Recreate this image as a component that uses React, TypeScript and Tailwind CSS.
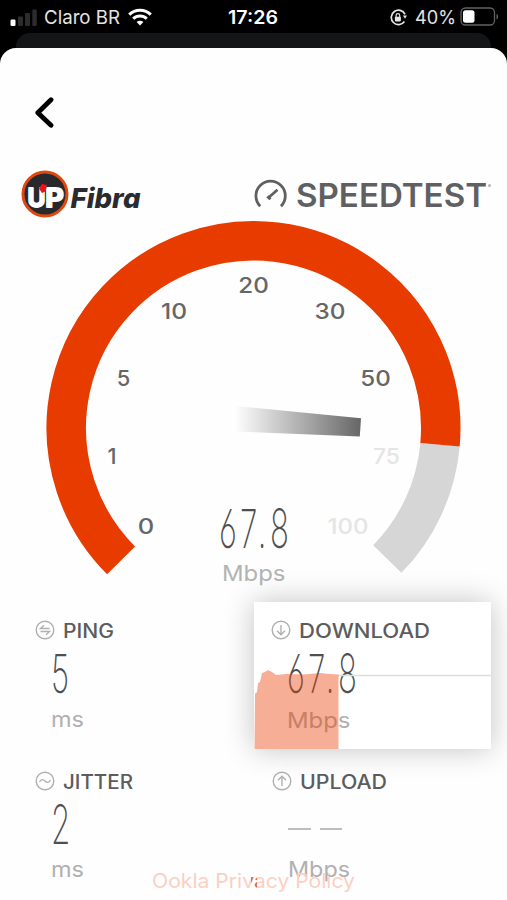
import type { ReactNode } from "react";

interface FitTextProps {
  text: string;
  width: number;
  size: number;
  height: number;
  baseline: number;
  className?: string;
}

// Single line of text stretched to an exact width
const FitText = ({ text, width, size, height, baseline, className }: FitTextProps) => (
  <svg width={width} height={height} className={`shrink-0 overflow-visible ${className ?? ""}`} fill="currentColor">
    <text x="0" y={baseline} fontSize={size} textLength={width} lengthAdjust="spacingAndGlyphs">
      {text}
    </text>
  </svg>
);

// Tall, condensed digits with loose tracking
const DIGIT_SCALE = 0.58;

const Digits = ({ text, x, y, width }: { text: string; x: number; y: number; width: number }) => (
  <text
    transform={`translate(${x} ${y}) scale(${DIGIT_SCALE} 1)`}
    fontSize="54"
    fontWeight="250"
    textLength={text.length > 1 ? width / DIGIT_SCALE : undefined}
    lengthAdjust="spacing"
    fill="#4f4f51"
    className="[font-feature-settings:'cv03']"
  >
    {text}
  </text>
);

const StatusBar = () => (
  <div className="flex h-[33px] shrink-0 items-center justify-between pl-[10px] pr-[8px] pt-[2px] text-[#e4e4e4]">
    <div className="flex w-[190px] items-center">
      <svg width="27" height="17" viewBox="0 0 27 17">
        <rect x="0.5" y="10.5" width="5" height="6.5" rx="1.2" fill="#fff" />
        <rect x="8" y="7.5" width="5" height="9.5" rx="1.2" fill="#2c2c2e" />
        <rect x="15" y="4" width="5" height="13" rx="1.2" fill="#2c2c2e" />
        <rect x="22.3" y="0.5" width="4.5" height="16.5" rx="1.2" fill="#2c2c2e" />
      </svg>
      <FitText text="Claro BR" width={76} size={19} height={20} baseline={16} className="ml-[7px]" />
      <svg width="24" height="18" viewBox="0 0 24 18" className="-mt-[2px] ml-[8px]" fill="none" stroke="#fff" strokeWidth="3">
        <path d="M1.2 6.6a15.4 15.4 0 0 1 21.600 0" />
        <path d="M5.2 10.700a9.700 9.700 0 0 1 13.600 0" />
        <path d="M12 17.500l-3.400-3.400a4.900 4.900 0 0 1 6.800 0z" fill="#fff" stroke="none" />
      </svg>
    </div>
    <FitText text="17:26" width={50} size={18.5} height={20} baseline={16} className="mr-[3px] font-semibold text-white" />
    <div className="flex w-[190px] items-center justify-end">
      <svg width="17" height="17" viewBox="0 0 17 17" fill="none" stroke="#e4e4e4" strokeWidth="1.7">
        <path d="M15 5.300A7.200 7.200 0 1 0 14.400 12.500" />
        <path d="M12.900 6.500h4.100l-2 3.300z" fill="#e4e4e4" stroke="none" />
        <rect x="4.9" y="7.8" width="6" height="4.6" rx="0.8" fill="#e4e4e4" stroke="none" />
        <path d="M6.100 8V6.500a1.800 1.800 0 0 1 3.600 0V8" strokeWidth="1.2" />
      </svg>
      <FitText text="40%" width={41} size={18.5} height={20} baseline={16} className="ml-[8px]" />
      <svg width="39" height="20" viewBox="0 0 39 20" className="-mt-[2px] ml-[4px]">
        <rect x="1" y="1" width="33.5" height="17" rx="4.5" fill="none" stroke="#626264" strokeWidth="1.3" />
        <rect x="3" y="3.3" width="11.500" height="12.500" rx="2.5" fill="#fff" />
        <path d="M36.500 7v5.400c2.200-1 2.200-4.400 0-5.400z" fill="#626264" />
      </svg>
    </div>
  </div>
);

const FibraLogo = () => (
  <svg width="122" height="50" viewBox="20 169 122 50" fontFamily="Inter">
    <circle cx="45" cy="194" r="22" fill="#27292d" stroke="#e1470f" strokeWidth="3" />
    <g fontSize="25.5" fontWeight="700" fill="#fff" stroke="#fff" strokeWidth="1.8" strokeLinejoin="round">
      <text x="27.5" y="206.500" textLength="18" lengthAdjust="spacingAndGlyphs">U</text>
      <text x="45.200" y="206.500" textLength="18.5" lengthAdjust="spacingAndGlyphs">P</text>
    </g>
    <path d="M39 188.500l3-4.500 5 1-1.500 6.500-3.500 1.500z" fill="#e9131b" />
    <text
      x="70.500"
      y="208"
      fontSize="27.5"
      fontWeight="800"
      fontStyle="italic"
      fill="#292b30"
      textLength="70"
      lengthAdjust="spacingAndGlyphs"
    >
      Fibra
    </text>
  </svg>
);

const SpeedtestLogo = () => (
  <div className="flex items-center text-[#606062]">
    <svg width="33" height="30" viewBox="0 0 33 30" fill="none" stroke="currentColor">
      <path d="M6.200 27.200A14.700 14.700 0 1 1 27 27.200" strokeWidth="2.8" />
      <path d="M15 18.300l8.500-7.600" strokeWidth="2.7" />
      <path d="M13.400 17.200l3 3.100" strokeWidth="3" />
    </svg>
    <FitText text="SPEEDTEST" width={191} size={32} height={30} baseline={27.5} className="ml-[9px] font-semibold" />
    <span className="mb-[18px] ml-[1px] size-[3px] rounded-full bg-[#b5b5b6]" />
  </div>
);

const ticks = [
  { label: "0", x: 146, y: 533.5, width: 16.5 },
  { label: "1", x: 112, y: 464, width: 9 },
  { label: "5", x: 123.5, y: 386, width: 13.5 },
  { label: "10", x: 174, y: 319, width: 26 },
  { label: "20", x: 253.5, y: 292.5, width: 30.5 },
  { label: "30", x: 330, y: 319, width: 31 },
  { label: "50", x: 375.5, y: 386, width: 30.5 },
  { label: "75", x: 386.5, y: 464, width: 27 },
  { label: "100", x: 348, y: 533.5, width: 41 },
];

const CX = 253.5;
const CY = 428;
const RADIUS = 187.25;
const SPEED = 67.8;

function arc(from: number, to: number) {
  const point = (deg: number) => {
    const a = (deg * Math.PI) / 180;
    return `${CX + RADIUS * Math.cos(a)} ${CY + RADIUS * Math.sin(a)}`;
  };
  return `M${point(from)}A${RADIUS} ${RADIUS} 0 ${to - from > 180 ? 1 : 0} 1 ${point(to)}`;
}

const Gauge = () => (
  <svg width="507" height="371" viewBox="0 219 507 371" className="shrink-0" fontFamily="Inter">
    <defs>
      <linearGradient id="needle" x1="235" x2="361" y1="0" y2="0" gradientUnits="userSpaceOnUse">
        <stop offset="0" stopColor="#666" stopOpacity="0" />
        <stop offset="1" stopColor="#666" />
      </linearGradient>
    </defs>
    <path d={arc(5.1, 44.4)} fill="none" stroke="#d6d6d6" strokeWidth="39.5" />
    <path d={arc(-225, 5.1)} fill="none" stroke="#e83b00" strokeWidth="39.5" />
    <path d="M235 406L361 418.300L359.800 436.400L235 431.500z" fill="url(#needle)" />
    {ticks.map((t) => (
      <text
        key={t.label}
        x={t.x}
        y={t.y}
        fontSize="21.5"
        fontWeight="500"
        textAnchor="middle"
        textLength={t.width}
        lengthAdjust="spacingAndGlyphs"
        fill={Number(t.label) > SPEED ? "#e5e5e5" : "#666668"}
      >
        {t.label}
      </text>
    ))}
    <Digits text={String(SPEED)} x={219} y={548} width={70} />
    <text x="222" y="580.500" fontSize="21.5" textLength="63.5" lengthAdjust="spacingAndGlyphs" fill="#b3b3b3">
      Mbps
    </text>
  </svg>
);

const RingIcon = ({ children }: { children: ReactNode }) => (
  <svg width="20" height="20" viewBox="0 0 20 20" fill="none" stroke="#b0b0b0" strokeWidth="1.4" className="shrink-0">
    <circle cx="10" cy="10" r="8.8" />
    {children}
  </svg>
);

interface StatProps {
  label: string;
  labelWidth: number;
  icon: ReactNode;
  unit: string;
  unitWidth: number;
  unitBaseline: number;
  value?: string;
  className: string;
  children?: ReactNode;
}

const Stat = ({ label, labelWidth, icon, unit, unitWidth, unitBaseline, value, className, children }: StatProps) => (
  <div className={`h-[147px] pt-[15px] ${className}`}>
    <div className="flex h-[26px] items-center gap-[8px]">
      <RingIcon>{icon}</RingIcon>
      <FitText text={label} width={labelWidth} size={19.5} height={20} baseline={17.5} className="font-medium text-[#5c5c5e]" />
    </div>
    <div className="flex h-[56px] pl-[16px]">
      {value ? (
        <svg width="70" height="56" className="shrink-0 overflow-visible">
          <Digits text={value} x={0} y={49.5} width={70} />
        </svg>
      ) : (
        <div className="flex gap-[9px] pt-[34px]">
          <span className="h-[2px] w-[22.5px] bg-[#bdbdbd]" />
          <span className="h-[2px] w-[22.5px] bg-[#bdbdbd]" />
        </div>
      )}
    </div>
    <div className="flex h-[36px] pl-[16px]">
      <FitText text={unit} width={unitWidth} size={21.5} height={36} baseline={unitBaseline} className="text-[#b0b0b0]" />
    </div>
    {children}
  </div>
);

const DownloadChart = () => (
  <svg width="237" height="147" viewBox="0 0 237 147" className="absolute inset-0">
    <path d="M84 73.500H237" stroke="#dedede" strokeWidth="1.5" />
    <path
      d="M0.500 147L1 92L3 90L4 81L6 80L8 71L11 70L14 68L18 70L22 73L32 72L50 72.500L66 71L76 72L84.500 72.500V147z"
      fill="#e83a00"
      fillOpacity="0.41"
    />
  </svg>
);

const PrivacyLink = () => (
  <svg width="203" height="24" className="overflow-visible">
    <defs>
      <linearGradient id="privacy" x1="0" x2="203" y1="0" y2="0" gradientUnits="userSpaceOnUse">
        <stop offset="0.489" stopColor="#fbcfc1" />
        <stop offset="0.489" stopColor="#d9663f" />
        <stop offset="0.516" stopColor="#d9663f" />
        <stop offset="0.516" stopColor="#fbcfc1" />
      </linearGradient>
    </defs>
    <text y="18" fontSize="20" textLength="203" lengthAdjust="spacingAndGlyphs" fill="url(#privacy)">
      Ookla Privacy Policy
    </text>
  </svg>
);

export default function App() {
  return (
    <div className="flex h-[900px] w-[507px] flex-col overflow-hidden bg-black font-['Inter',sans-serif]">
      <StatusBar />
      <div className="mx-[16px] h-[31px] shrink-0 rounded-t-[14px] bg-[#141517]" />
      <main className="relative -mt-[16px] flex h-[852px] shrink-0 flex-col rounded-t-[16px] bg-[#fefefe]">
        <div className="h-[121px] shrink-0 pl-[34px] pt-[49px]">
          <svg width="21" height="32" viewBox="0 0 21 32" fill="none" stroke="#000" strokeWidth="4.8">
            <path d="M17 2.800L3.800 15.800L17 28.300" strokeLinecap="round" strokeLinejoin="round" />
          </svg>
        </div>
        <div className="flex h-[50px] shrink-0 items-center justify-between pl-[20px] pr-[16px]">
          <FibraLogo />
          <SpeedtestLogo />
        </div>
        <Gauge />
        <div className="mt-[12px] grid shrink-0 grid-cols-[254px_237px] gap-y-[4px]">
          <Stat
            label="PING"
            labelWidth={51}
            value="5"
            unit="ms"
            unitWidth={33}
            unitBaseline={27.5}
            className="pl-[35px]"
            icon={<path d="M14.500 8.500H5.500L9 5.300M5.500 11.500h9L11 14.700" />}
          />
          <Stat
            label="DOWNLOAD"
            labelWidth={131}
            value={String(SPEED)}
            unit="Mbps"
            unitWidth={63.5}
            unitBaseline={28.5}
            className="relative bg-white pl-[17px] shadow-[0_0_28px_rgba(0,0,0,0.24)]"
            icon={<path d="M10 5v9.500M6 10.700l4 4 4-4" />}
          >
            <DownloadChart />
          </Stat>
          <Stat
            label="JITTER"
            labelWidth={70}
            value="2"
            unit="ms"
            unitWidth={33}
            unitBaseline={27}
            className="pl-[35px]"
            icon={<path d="M4.500 11c1.800-3 3.700-3 5.500-1s3.700 2 5.500-1" />}
          />
          <Stat
            label="UPLOAD"
            labelWidth={87}
            unit="Mbps"
            unitWidth={62}
            unitBaseline={27}
            className="pl-[18px]"
            icon={<path d="M10 15V5.500M6 9.300l4-4 4 4" />}
          />
        </div>
        <div className="-mt-[30px] flex justify-center">
          <PrivacyLink />
        </div>
      </main>
    </div>
  );
}
